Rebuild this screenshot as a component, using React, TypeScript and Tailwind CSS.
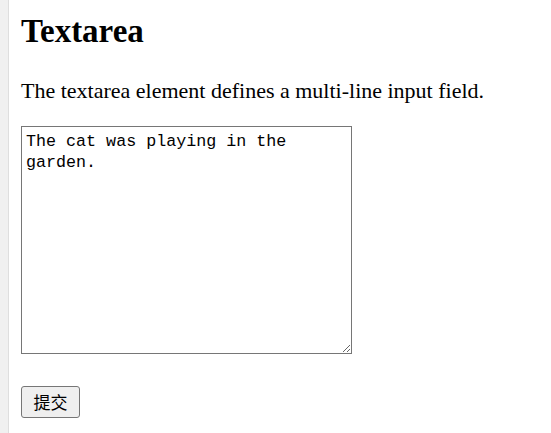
export default function App() {
  return (
    <div className="flex min-h-[433px] w-full bg-white">
      <div className="w-[9px] shrink-0 border-r border-[#dedede] bg-[#f0f0f0]" />
      <div className="pl-[12px] pt-[12px] text-black" style={{ fontFamily: '"Liberation Serif", "Times New Roman", serif' }}>
        <h1 className="text-[33px] font-bold leading-[38px]">Textarea</h1>
        <p className="mt-[28px] text-[22px] leading-[25px]">
          The textarea element defines a multi-line input field.
        </p>
        <form className="mt-[23px]" onSubmit={(e) => e.preventDefault()}>
          <textarea
            className="block h-[228px] w-[331px] resize border border-[#767676] px-[4px] pt-[4px] pb-[2px] text-[16.7px] leading-[21px] outline-none"
            style={{ fontFamily: '"Liberation Mono", "DejaVu Sans Mono", monospace' }}
            defaultValue="The cat was playing in the garden."
          />
          <button
            type="submit"
            className="mt-[32px] h-[32px] w-[59px] rounded-[3px] border border-[#767676] bg-[#efefef] text-[17px]"
            style={{ fontFamily: '"Noto Sans CJK SC", sans-serif' }}
          >
            提交
          </button>
        </form>
      </div>
    </div>
  );
}
